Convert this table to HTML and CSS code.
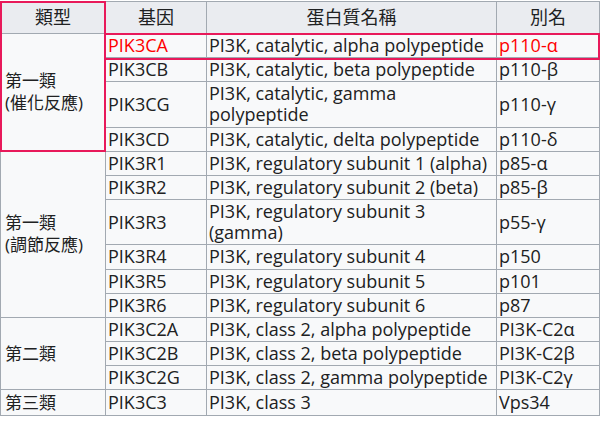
FILE: index.html
```html
<!DOCTYPE html>
<html lang="zh-Hant">
<head>
<meta charset="utf-8">
<link rel="stylesheet" href="styles.css">
</head>
<body>
<div class="wrap">
<table class="wikitable">
<colgroup><col class="c1"><col class="c2"><col class="c3"><col class="c4"></colgroup>
<thead>
<tr><th>類型</th><th>基因</th><th>蛋白質名稱</th><th>別名</th></tr>
</thead>
<tbody>
<tr><td class="grp" rowspan="4">第一類<br>(催化反應)</td><td class="red">PIK3CA</td><td>PI3K, catalytic, alpha polypeptide</td><td class="red">p110-α</td></tr>
<tr><td>PIK3CB</td><td>PI3K, catalytic, beta polypeptide</td><td>p110-β</td></tr>
<tr><td>PIK3CG</td><td>PI3K, catalytic, gamma polypeptide</td><td>p110-γ</td></tr>
<tr><td>PIK3CD</td><td>PI3K, catalytic, delta polypeptide</td><td>p110-δ</td></tr>
<tr><td class="grp" rowspan="6">第一類<br>(調節反應)</td><td>PIK3R1</td><td>PI3K, regulatory subunit 1 (alpha)</td><td>p85-α</td></tr>
<tr><td>PIK3R2</td><td>PI3K, regulatory subunit 2 (beta)</td><td>p85-β</td></tr>
<tr><td>PIK3R3</td><td>PI3K, regulatory subunit 3 (gamma)</td><td>p55-γ</td></tr>
<tr><td>PIK3R4</td><td>PI3K, regulatory subunit 4</td><td>p150</td></tr>
<tr><td>PIK3R5</td><td>PI3K, regulatory subunit 5</td><td>p101</td></tr>
<tr><td>PIK3R6</td><td>PI3K, regulatory subunit 6</td><td>p87</td></tr>
<tr><td class="grp" rowspan="3">第二類</td><td>PIK3C2A</td><td>PI3K, class 2, alpha polypeptide</td><td>PI3K-C2α</td></tr>
<tr><td>PIK3C2B</td><td>PI3K, class 2, beta polypeptide</td><td>PI3K-C2β</td></tr>
<tr><td>PIK3C2G</td><td>PI3K, class 2, gamma polypeptide</td><td>PI3K-C2γ</td></tr>
<tr><td class="grp">第三類</td><td>PIK3C3</td><td>PI3K, class 3</td><td>Vps34</td></tr>
</tbody>
</table>
<div class="mark mark-type"></div>
<div class="mark mark-row"></div>
</div>
</body>
</html>
```
FILE: styles.css
```css
html, body { margin: 0; padding: 0; background: #fff; }
.wrap { position: relative; width: 600px; }
.wikitable {
  border-collapse: collapse;
  table-layout: fixed;
  width: 599px;
  margin-top: 1px;
  font-family: "Open Sans", "Noto Sans CJK TC", sans-serif;
  font-size: 18px;
  line-height: 21px;
  color: #202122;
  background: #f8f9fa;
}
.c1 { width: 105px; }
.c2 { width: 101px; }
.c3 { width: 290px; }
.c4 { width: 103px; }
.wikitable th, .wikitable td {
  border: 1px solid #a2a9b1;
  padding: 1.1px 2px 1.1px 2px;
  vertical-align: middle;
  text-align: left;
  font-weight: normal;
}
.wikitable th {
  background: #eaecf0;
  text-align: center;
  padding: 5px 2px 5px 2px;
}
.wikitable td.grp {
  font-size: 17px;
  line-height: 22px;
  padding-left: 4px;
}
.red { color: #ff0000; }
.mark { position: absolute; border: 2.5px solid #e8195a; box-sizing: border-box; pointer-events: none; }
.mark-type { left: 0; top: 0; width: 106px; height: 151px; }
.mark-row { left: 104px; top: 32px; width: 496px; height: 27px; }
```
